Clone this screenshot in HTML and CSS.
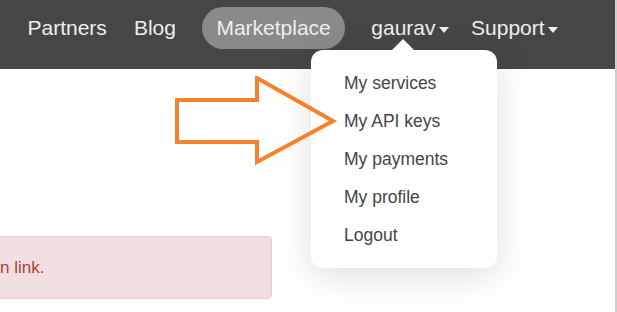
FILE: index.html
```html
<!DOCTYPE html>
<html lang="en">
<head>
	<meta charset="UTF-8">
	<meta name="viewport" content="width=device-width, initial-scale=1.0">
	<title>Account menu</title>
	<link rel="stylesheet" href="styles.css">
</head>
<body>
	<div class="page">
		<nav class="navbar">
			<a class="nav-link" href="#">Partners</a>
			<a class="nav-link" href="#">Blog</a>
			<a class="nav-link pill" href="#">Marketplace</a>
			<a class="nav-link toggle" href="#">gaurav<span class="caret"></span></a>
			<a class="nav-link toggle" href="#">Support<span class="caret"></span></a>
		</nav>

		<div class="content">
			<div class="alert">n link.</div>
		</div>

		<ul class="dropdown">
			<li><a href="#">My services</a></li>
			<li><a href="#">My API keys</a></li>
			<li><a href="#">My payments</a></li>
			<li><a href="#">My profile</a></li>
			<li><a href="#">Logout</a></li>
		</ul>

		<svg class="arrow" width="180" height="100" viewBox="0 0 180 100">
			<polygon points="2,24 82,24 82,2 158,45 82,86 82,66 2,66" />
		</svg>
	</div>
</body>
</html>
```

FILE: styles.css
```css
body {
	margin: 0;
	font-family: "Liberation Sans", Arial, sans-serif;
	background: #fff;
}
.page {
	position: relative;
	width: 615px;
	height: 312px;
	border-right: 2px solid #cfcfcf;
	overflow: hidden;
}
.navbar {
	display: flex;
	align-items: flex-start;
	height: 62px;
	padding: 7px 0 0 14px;
	background: #464646;
}
.nav-link {
	display: flex;
	align-items: center;
	height: 42px;
	padding: 0 13.5px;
	font-size: 21px;
	color: #eee;
	text-decoration: none;
}
.pill {
	margin: 0 13px;
	padding: 0 14px;
	border-radius: 21px;
	background: #8a8a8a;
}
.toggle {
	padding-right: 9px;
}
.caret {
	display: inline-block;
	margin: 3px 0 0 3px;
	border-top: 6px solid #eee;
	border-left: 5.5px solid transparent;
	border-right: 5.5px solid transparent;
}
.content {
	padding-top: 167px;
}
.alert {
	width: 292px;
	margin-left: -20px;
	padding: 18px 0 18px 19px;
	box-sizing: border-box;
	line-height: 25px;
	font-size: 17px;
	color: #a94442;
	background: #f2dede;
	border: 1px solid #ebccd1;
	border-radius: 4px;
}
.dropdown {
	position: absolute;
	left: 311px;
	top: 50px;
	width: 186px;
	margin: 0;
	padding: 14px 0;
	list-style: none;
	background: #fff;
	border-radius: 12px;
	box-shadow: 0 8px 36px rgba(0,0,0,0.13);
}
.dropdown::before {
	content: "";
	position: absolute;
	left: 81px;
	top: -11px;
	border-bottom: 11px solid #fff;
	border-left: 11px solid transparent;
	border-right: 11px solid transparent;
}
.dropdown a {
	display: block;
	padding-left: 33px;
	line-height: 38px;
	font-size: 17.5px;
	color: #454545;
	text-decoration: none;
}
.arrow {
	position: absolute;
	left: 175px;
	top: 76px;
}
.arrow polygon {
	fill: none;
	stroke: #f5822a;
	stroke-width: 4;
	stroke-linejoin: miter;
}
```
